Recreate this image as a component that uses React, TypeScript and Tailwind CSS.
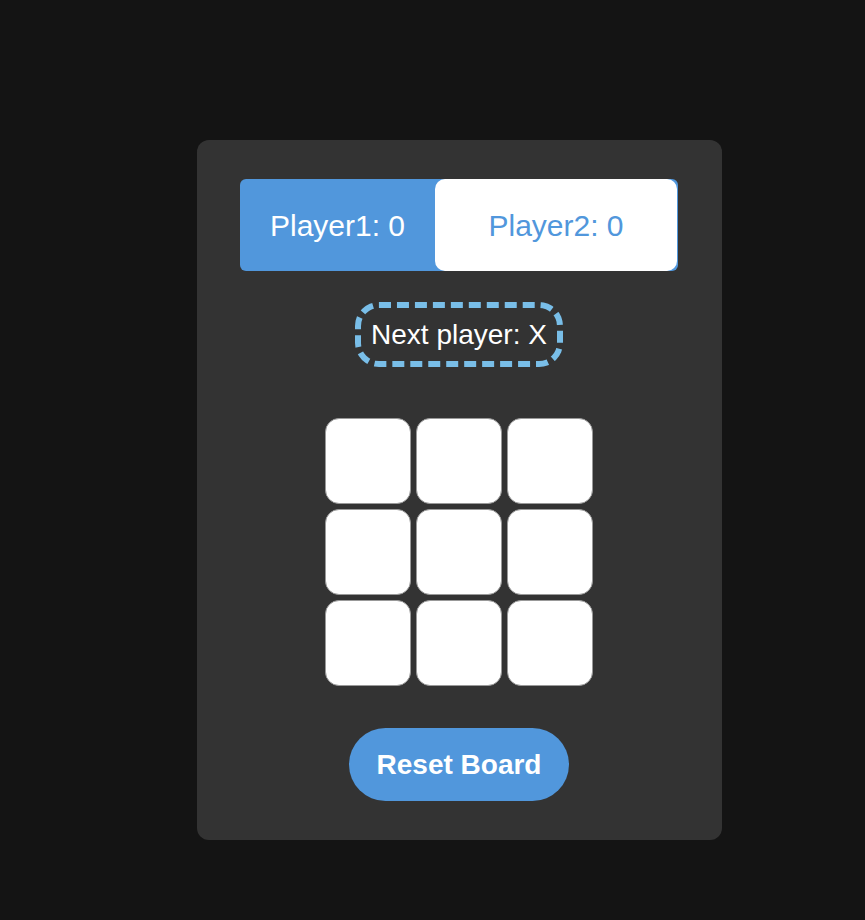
export default function App() {
  const cells = Array.from({ length: 9 }, (_, i) => i);

  return (
    <div className="min-h-[920px] w-full bg-[#141414] flex pl-[197px] pt-[140px] font-['Liberation_Sans',Arial,sans-serif]">
      <div className="w-[525px] h-[700px] bg-[#333333] rounded-[12px] flex flex-col items-center pt-[39px] pr-px">
        {/* score bar */}
        <div className="w-[438px] h-[92px] bg-[#5197dc] rounded-[6px] flex">
          <div className="w-[195px] flex items-center justify-center text-white text-[30px]">Player1: 0</div>
          <div className="flex-1 mr-px bg-white rounded-[10px] flex items-center justify-center text-[#5197dc] text-[30px]">
            Player2: 0
          </div>
        </div>

        <div className="mt-[31px] h-[65px] px-[10px] border-[6px] border-dashed border-[#79bee8] rounded-[24px] flex items-center text-white text-[28px]">
          Next player: X
        </div>

        {/* board */}
        <div className="mt-[51px] grid grid-cols-[86px_86px_86px] gap-[5px]">
          {cells.map((c) => (
            <button key={c} className="w-[86px] h-[86px] bg-white border border-[#999999] rounded-[14px]" />
          ))}
        </div>

        <button className="mt-[42px] w-[220px] h-[73px] rounded-full bg-[#5197dc] text-white font-bold text-[28px]">
          Reset Board
        </button>
      </div>
    </div>
  );
}
